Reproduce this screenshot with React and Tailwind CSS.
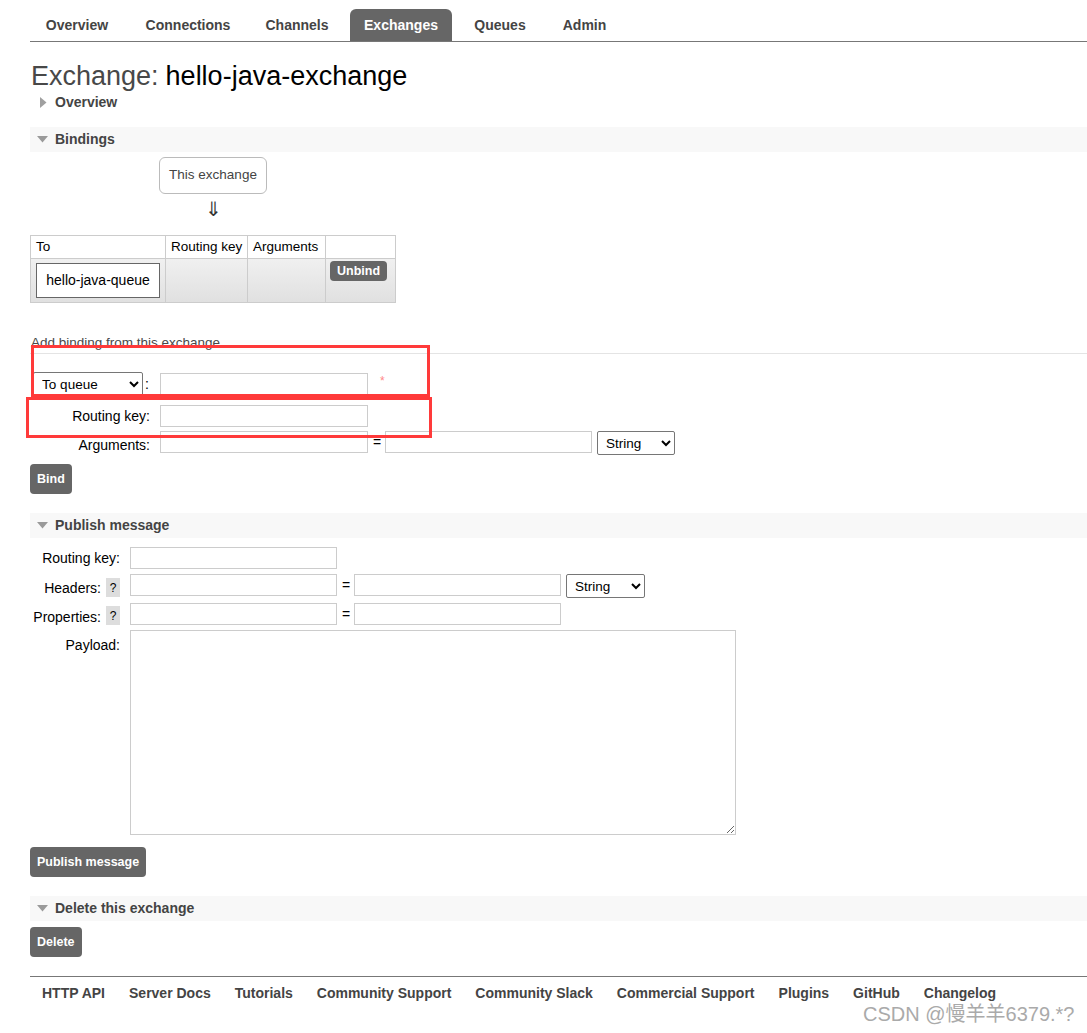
import React from "react";

const F = { fontFamily: '"Liberation Sans", Arial, sans-serif' };

function Tab({ label, active, w }) {
  return (
    <div
      className={
        "h-[32px] flex items-center justify-center rounded-t-[6px] text-[14px] font-bold " +
        w +
        " " +
        (active ? "bg-[#666666] text-white" : "text-[#444444]")
      }
    >
      {label}
    </div>
  );
}

function DownTri() {
  return (
    <svg width="11" height="7" viewBox="0 0 11 7" className="ml-[7px] mr-[7px]">
      <path d="M0 0 L11 0 L5.5 6.5 Z" fill="#9a9a9a" />
    </svg>
  );
}

function SectionHeader({ label }) {
  return (
    <div className="h-[25px] bg-[#f8f8f8] flex items-center text-[14px] font-bold text-[#444444]">
      <DownTri />
      {label}
    </div>
  );
}

function Btn({ children }) {
  return (
    <button
      className="h-[30px] px-[7px] rounded-[4px] bg-[#666666] text-white text-[12.5px] font-bold leading-none"
      style={F}
    >
      {children}
    </button>
  );
}

function Input({ w = "w-[208px]" }) {
  return <input className={"block h-[22px] border border-[#cccccc] bg-white " + w} />;
}

function Sel({ label, w }) {
  return (
    <select
      className={"block h-[24px] border border-[#767676] rounded-[2px] bg-white text-[13.5px] text-black pl-[4px] " + w}
      style={F}
      defaultValue={label}
    >
      <option>{label}</option>
    </select>
  );
}

function Help() {
  return (
    <span className="ml-[5px] w-[14px] h-[19px] bg-[#dddddd] flex items-center justify-center text-[12px] leading-none">
      ?
    </span>
  );
}

export default function App() {
  return (
    <div className="relative w-[1087px] min-h-[1033px] bg-white text-[#484848] leading-normal" style={F}>
      <div className="pl-[30px]">
        {/* nav */}
        <div className="pt-[9px] flex gap-[8px] border-b border-[#777777]">
          <Tab label="Overview" w="w-[94px]" />
          <Tab label="Connections" w="w-[112px]" />
          <Tab label="Channels" w="w-[90px]" />
          <Tab label="Exchanges" w="w-[102px]" active />
          <Tab label="Queues" w="w-[80px]" />
          <Tab label="Admin" w="w-[73px]" />
        </div>

        {/* title */}
        <div className="mt-[17px] h-[34px] flex items-center text-[27px] pl-[1px] leading-none">
          <span className="text-[#484848]">Exchange:</span>
          <span className="text-black ml-[7px]">hello-java-exchange</span>
        </div>
        <div className="h-[18px] flex items-center text-[14px] font-bold text-[#444444] leading-none">
          <svg width="7" height="11" viewBox="0 0 7 11" className="ml-[10px] mr-[8px]">
            <path d="M0 0 L6.5 5.5 L0 11 Z" fill="#a0a0a0" />
          </svg>
          Overview
        </div>

        {/* bindings */}
        <div className="mt-[16px]">
          <SectionHeader label="Bindings" />
        </div>
        <div className="ml-[129px] w-[108px]">
          <div className="mt-[5px] h-[37px] border border-[#bbbbbb] rounded-[6px] flex items-center justify-center text-[13.5px] text-[#444444]">
            This exchange
          </div>
          <div className="h-[30px] flex items-center justify-center text-[20px] text-[#333333] leading-none">⇓</div>
        </div>
        <table className="mt-[11px] border-collapse text-[13.5px] text-black">
          <thead>
            <tr className="h-[23px] bg-white">
              <th className="w-[135px] border border-[#cccccc] text-left font-normal pl-[5px]">To</th>
              <th className="w-[82px] border border-[#cccccc] text-left font-normal pl-[5px]">Routing key</th>
              <th className="w-[78px] border border-[#cccccc] text-left font-normal pl-[5px]">Arguments</th>
              <th className="w-[70px] border border-[#cccccc]"></th>
            </tr>
          </thead>
          <tbody>
            <tr className="h-[44px] bg-gradient-to-b from-[#f0f0f0] to-[#e0e0e0]">
              <td className="border border-[#cccccc] px-[5px] align-middle">
                <div className="h-[35px] border border-[#666666] bg-white flex items-center justify-center text-[14px]">
                  hello-java-queue
                </div>
              </td>
              <td className="border border-[#cccccc]"></td>
              <td className="border border-[#cccccc]"></td>
              <td className="border border-[#cccccc] align-top pt-[2px] pl-[4px]">
                <button className="h-[20px] px-[7px] rounded-[4px] bg-[#666666] text-white text-[12.5px] font-bold leading-none" style={F}>
                  Unbind
                </button>
              </td>
            </tr>
          </tbody>
        </table>

        {/* add binding */}
        <div className="mt-[33px] h-[18px] border-b border-[#e4e4e4] text-[13.5px] text-[#484848] pl-[1px] leading-[14px]">
          Add binding from this exchange
        </div>
        <div className="mt-[18px] h-[24px] flex items-center text-[14px] text-black leading-none">
          <div className="w-[120px] flex items-center justify-end">
            <Sel label="To queue" w="w-[110px]" />
            <span className="ml-[2px] mr-[1px]">:</span>
          </div>
          <div className="ml-[10px]"><Input /></div>
          <span className="ml-[12px] text-[#ff8888] text-[12px] -mt-[6px]">*</span>
        </div>
        <div className="mt-[9px] h-[22px] flex items-center text-[14px] text-black leading-none">
          <div className="w-[120px] text-right">Routing key:</div>
          <div className="ml-[10px]"><Input /></div>
        </div>
        <div className="mt-[4px] h-[24px] flex items-start text-[14px] text-black leading-none">
          <div className="w-[120px] text-right pt-[7px]">Arguments:</div>
          <div className="ml-[10px]"><Input /></div>
          <span className="mx-[5px] pt-[4px] w-[7px]">=</span>
          <Input w="w-[207px]" />
          <div className="ml-[5px]"><Sel label="String" w="w-[78px]" /></div>
        </div>
        <div className="mt-[9px] h-[30px]">
          <Btn>Bind</Btn>
        </div>

        {/* publish */}
        <div className="mt-[19px]">
          <SectionHeader label="Publish message" />
        </div>
        <div className="mt-[9px] h-[22px] flex items-center text-[14px] text-black leading-none">
          <div className="w-[90px] text-right">Routing key:</div>
          <div className="ml-[10px]"><Input w="w-[207px]" /></div>
        </div>
        <div className="mt-[5px] h-[24px] flex items-start text-[14px] text-black leading-none">
          <div className="w-[90px] flex justify-end items-start">
            <span className="pt-[7px]">Headers:</span>
            <span className="mt-[4px]"><Help /></span>
          </div>
          <div className="ml-[10px]"><Input w="w-[207px]" /></div>
          <span className="mx-[5px] pt-[4px] w-[7px]">=</span>
          <Input w="w-[207px]" />
          <div className="ml-[5px]"><Sel label="String" w="w-[79px]" /></div>
        </div>
        <div className="mt-[5px] h-[22px] flex items-start text-[14px] text-black leading-none">
          <div className="w-[90px] flex justify-end items-start">
            <span className="pt-[7px]">Properties:</span>
            <span className="mt-[3px]"><Help /></span>
          </div>
          <div className="ml-[10px]"><Input w="w-[207px]" /></div>
          <span className="mx-[5px] pt-[4px] w-[7px]">=</span>
          <Input w="w-[207px]" />
        </div>
        <div className="mt-[5px] h-[205px] flex items-start text-[14px] text-black leading-none">
          <div className="w-[90px] text-right pt-[8px]">Payload:</div>
          <textarea className="ml-[10px] w-[606px] h-[205px] border border-[#cccccc] bg-white block" />
        </div>
        <div className="mt-[12px] h-[30px]">
          <Btn>Publish message</Btn>
        </div>

        {/* delete */}
        <div className="mt-[19px]">
          <SectionHeader label="Delete this exchange" />
        </div>
        <div className="mt-[6px] h-[30px]">
          <Btn>Delete</Btn>
        </div>

        {/* footer */}
        <div className="mt-[19px] border-t border-[#777777] h-[32px] flex items-center pl-[12px] gap-[24px] text-[14px] font-bold text-[#444444] leading-none">
          <span>HTTP API</span>
          <span>Server Docs</span>
          <span>Tutorials</span>
          <span>Community Support</span>
          <span>Community Slack</span>
          <span>Commercial Support</span>
          <span>Plugins</span>
          <span>GitHub</span>
          <span>Changelog</span>
        </div>
      </div>
      <div
        className="absolute left-[863px] top-[1004px] text-[20px] leading-none text-[#aaaaaa] whitespace-nowrap"
        style={{ fontFamily: '"Liberation Sans", Arial, "Noto Sans CJK SC", sans-serif' }}
      >
        CSDN @慢羊羊6379.*?
      </div>

      {/* red annotation boxes */}
      <div className="absolute left-[31px] top-[345px] w-[399px] h-[52px] border-[3px] border-[#ff3a3a]" />
      <div className="absolute left-[26px] top-[397px] w-[406px] h-[41px] border-[3px] border-[#ff3a3a]" />
    </div>
  );
}
